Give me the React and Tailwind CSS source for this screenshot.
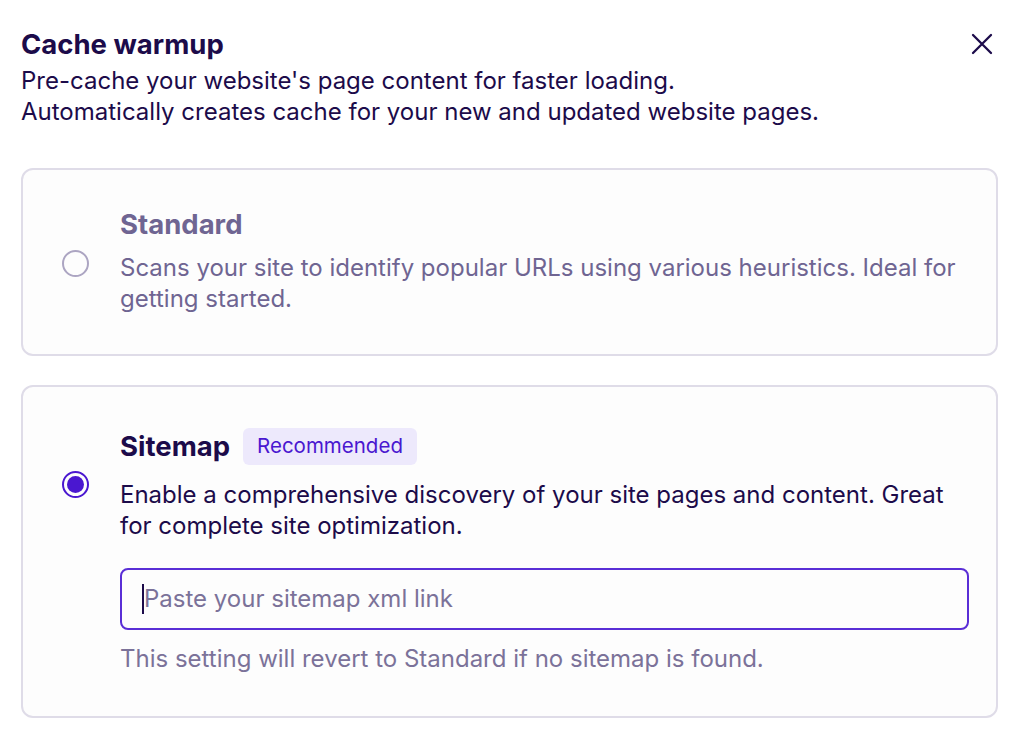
import React from "react";

export default function App() {
  return (
    <div className="w-[1024px] h-[735px] bg-white overflow-hidden text-[#1c0b4a]" style={{ fontFamily: "Inter, 'Noto Sans', sans-serif" }}>
      <div className="px-[21px] pt-[26px]">
        <div className="flex items-start justify-between">
          <div>
            <h1 className="mb-[3px] text-[27.5px] leading-[36px] font-bold text-[#1c0b4a]">Cache warmup</h1>
            <p className="text-[24px] leading-[31px] text-[#1c0b4a]">Pre-cache your website's page content for faster loading.</p>
            <p className="text-[24px] leading-[31px] text-[#1c0b4a]">Automatically creates cache for your new and updated website pages.</p>
          </div>
          <button className="mt-[7px] mr-[10px] text-[#1c0b4a]">
            <svg width="22" height="22" viewBox="0 0 22 22" fill="none" stroke="currentColor" strokeWidth="2.3" strokeLinecap="round">
              <path d="M2 2L20 20M20 2L2 20" />
            </svg>
          </button>
        </div>

        <div className="mt-[41px] w-[977px] h-[188px] rounded-[12px] border-2 border-[#dfdce8] bg-[#fdfdfd] flex items-start pl-[39px] pr-[28px] pt-[36px]">
          <div className="mt-[44px] w-[27px] h-[27px] rounded-full border-2 border-[#aca5c2] shrink-0" />
          <div className="ml-[31px]">
            <div className="text-[27.5px] leading-[36px] font-bold text-[#6f6592]">Standard</div>
            <p className="mt-[10px] text-[24px] leading-[31px] text-[#6f6592]">Scans your site to identify popular URLs using various heuristics. Ideal for getting started.</p>
          </div>
        </div>

        <div className="mt-[29px] w-[977px] h-[333px] rounded-[12px] border-2 border-[#dfdce8] bg-[#fdfdfd] flex items-start pl-[39px] pr-[27px] pt-[40px]">
          <div className="mt-[44px] w-[27px] h-[27px] rounded-full border-2 border-[#4a17d0] shrink-0 flex items-center justify-center">
            <div className="w-[17px] h-[17px] rounded-full bg-[#4a17d0]" />
          </div>
          <div className="ml-[31px] flex-1">
            <div className="flex items-center h-[38px]">
              <span className="text-[27.5px] leading-[38px] font-bold text-[#1c0b4a]">Sitemap</span>
              <span className="ml-[13px] rounded-[6px] bg-[#ede9fc] px-[14px] h-[37px] flex items-center text-[20.5px] text-[#4a17d0]">Recommended</span>
            </div>
            <p className="mt-[14px] text-[24px] leading-[31px] text-[#1c0b4a]">Enable a comprehensive discovery of your site pages and content. Great for complete site optimization.</p>
            <div className="mt-[27px] h-[62px] rounded-[8px] border-2 border-[#5a2ed6] bg-[#fdfdfd] flex items-center pl-[20px]">
              <span className="w-[2px] h-[30px] bg-[#1c0b4a]" />
              <span className="text-[24px] text-[#7b7299]">Paste your sitemap xml link</span>
            </div>
            <p className="mt-[13px] text-[24px] leading-[31px] text-[#7b7299]">This setting will revert to Standard if no sitemap is found.</p>
          </div>
        </div>
      </div>
    </div>
  );
}
